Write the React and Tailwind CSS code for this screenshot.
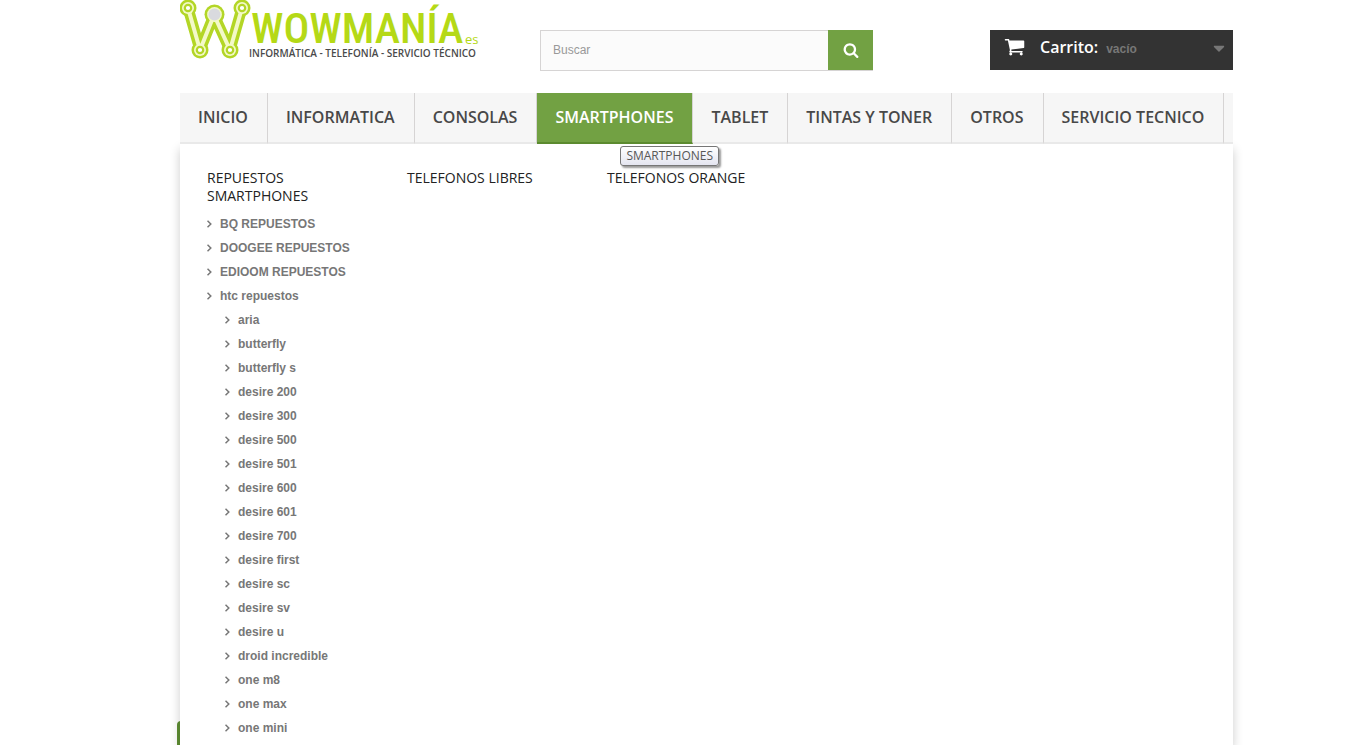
import { FaCaretDown } from 'react-icons/fa';

const menu = ['INICIO', 'INFORMATICA', 'CONSOLAS', 'SMARTPHONES', 'TABLET', 'TINTAS Y TONER', 'OTROS', 'SERVICIO TECNICO'];

const brands = ['BQ REPUESTOS', 'DOOGEE REPUESTOS', 'EDIOOM REPUESTOS', 'htc repuestos'];

const models = [
  'aria',
  'butterfly',
  'butterfly s',
  'desire 200',
  'desire 300',
  'desire 500',
  'desire 501',
  'desire 600',
  'desire 601',
  'desire 700',
  'desire first',
  'desire sc',
  'desire sv',
  'desire u',
  'droid incredible',
  'one m8',
  'one max',
  'one mini',
];

const nodes = [
  [8, 8],
  [62, 8],
  [20, 50],
  [50, 50],
];

const CartIcon = () => (
  <svg width="21" height="21" viewBox="0 0 1792 1792" fill="currentColor" className="shrink-0">
    <path d="M704 1536q0 52-38 90t-90 38-90-38-38-90 38-90 90-38 90 38 38 90zm896 0q0 52-38 90t-90 38-90-38-38-90 38-90 90-38 90 38 38 90zm128-1088v512q0 24-16.5 42.5t-40.5 21.5l-1044 122q13 60 13 70 0 16-24 64h920q26 0 45 19t19 45-19 45-45 19h-1024q-26 0-45-19t-19-45q0-11 8-31.5t16-36 21.5-40 15.5-29.5l-177-823h-204q-26 0-45-19t-19-45 19-45 45-19h256q16 0 28.5 6.5t19.5 15.5 13 24.5 8 26 5.5 29.5 4.5 26h1201q26 0 45 19t19 45z" />
  </svg>
);

const SearchIcon = () => (
  <svg width="16" height="16" viewBox="0 0 1792 1792" fill="currentColor">
    <path d="M1216 832q0-185-131.5-316.5t-316.5-131.5-316.5 131.5-131.5 316.5 131.5 316.5 316.5 131.5 316.5-131.5 131.5-316.5zm512 832q0 52-38 90t-90 38q-54 0-90-38l-343-342q-179 124-399 124-143 0-273.5-55.5t-225-150-150-225-55.5-273.5 55.5-273.5 150-225 225-150 273.5-55.5 273.5 55.5 225 150 150 225 55.5 273.5q0 220-124 399l343 343q37 37 37 90z" />
  </svg>
);

const AngleIcon = () => (
  <svg width="5" height="8" viewBox="0 0 5 8" fill="none" stroke="currentColor" strokeWidth="1.5" className="shrink-0">
    <path d="M0.5 0.8 L3.8 4 L0.5 7.2" />
  </svg>
);

const Logo = () => (
  <a href="#" aria-label="Wowmanía" className="block">
    <svg width="300" height="62" viewBox="0 0 300 62">
      <g fill="none" strokeLinejoin="round">
        <path d="M8 8 L20 50 L34 15 L50 50 L62 8" stroke="#b3d626" strokeWidth="11" />
        {nodes.map(([x, y]) => (
          <circle key={`${x}-${y}`} cx={x} cy={y} r="8.5" fill="#b3d626" />
        ))}
        <circle cx="34.5" cy="14.5" r="10" fill="#b3d626" />
        <path d="M8 8 L20 50 L34 15 L50 50 L62 8" stroke="#f3f9c8" strokeWidth="4" />
        {nodes.map(([x, y]) => (
          <g key={`${x}-${y}`}>
            <circle cx={x} cy={y} r="6" fill="#f3f9c8" />
            <circle cx={x} cy={y} r="3.2" fill="#fff" stroke="#b3d626" strokeWidth="2.2" />
          </g>
        ))}
        <circle cx="34.5" cy="14.5" r="7.4" fill="#f3f9c8" />
        <circle cx="34.5" cy="14.5" r="6" fill="#d9dade" />
      </g>
      <text x="71" y="43" fill="#b5d916" className="font-['Roboto_Condensed','Liberation_Sans_Narrow',sans-serif] text-[43px] font-medium">
        WOWMANÍA
      </text>
      <text x="285" y="44" fill="#b5d916" className="font-['Open_Sans',sans-serif] text-[13px]">
        es
      </text>
      <text x="69" y="57" fill="#4a4a4a" className="font-['Open_Sans',sans-serif] text-[10px] font-semibold">
        INFORMÁTICA - TELEFONÍA - SERVICIO TÉCNICO
      </text>
    </svg>
  </a>
);

const Search = () => (
  <form className="flex h-[41px] w-[333px]" onSubmit={(e) => e.preventDefault()}>
    <input
      type="text"
      aria-label="Buscar"
      placeholder="Buscar"
      className="min-w-0 flex-1 border border-r-0 border-[#d6d4d4] bg-[#fbfbfb] px-3 pb-[2px] text-xs text-[#686666] outline-none placeholder:text-[#999999]"
    />
    <button type="submit" aria-label="Buscar" className="flex w-[45px] items-center justify-center border-b border-[#d6d4d4] bg-[#72a143] text-white">
      <SearchIcon />
    </button>
  </form>
);

const Cart = () => (
  <a href="#" className="ml-auto flex h-10 w-[243px] items-center bg-[#333333] pr-[5px] pl-[14px] text-white">
    <span className="pb-2">
      <CartIcon />
    </span>
    <span className="ml-[15px] pb-[6px] font-['Open_Sans',sans-serif] text-base font-semibold">Carrito:</span>
    <span className="ml-2 pb-[3px] text-xs font-bold text-[#777777]">vacío</span>
    <FaCaretDown size={18} className="ml-auto mb-1 text-[#777777]" />
  </a>
);

const Item = ({ children }) => (
  <li className="h-6">
    <a href="#" className="flex items-center gap-2 leading-6">
      <AngleIcon />
      {children}
    </a>
  </li>
);

const Heading = ({ children }) => (
  <h4 className="font-['Open_Sans',sans-serif] text-sm leading-[18px] font-medium text-[#222222]">
    <a href="#">{children}</a>
  </h4>
);

const SubMenu = () => (
  <div className="relative flex flex-1 bg-white pt-[25px] pl-[27px] shadow-[0_5px_10px_rgba(0,0,0,0.2)]">
    <div className="w-[200px]">
      <div className="w-[140px]">
        <Heading>REPUESTOS SMARTPHONES</Heading>
      </div>
      <ul className="pt-[7px] text-xs font-bold text-[#777777]">
        {brands.map((name) => (
          <Item key={name}>{name}</Item>
        ))}
        <li>
          <ul className="pl-[18px]">
            {models.map((name) => (
              <Item key={name}>{name}</Item>
            ))}
          </ul>
        </li>
      </ul>
    </div>
    <div className="w-[200px]">
      <Heading>TELEFONOS LIBRES</Heading>
    </div>
    <div className="w-[200px]">
      <Heading>TELEFONOS ORANGE</Heading>
    </div>
  </div>
);

const NavItem = ({ label, active }) => (
  <li className="relative">
    <a
      href="#"
      className={`block h-[51px] border-r border-b-2 pt-[13px] pr-[19px] pl-[18px] text-base leading-[22px] font-semibold ${
        active
          ? 'border-r-[#d6d4d4] border-b-[#5b8a2f] bg-[#72a143] text-white'
          : 'border-r-[#d6d4d4] border-b-[#e9e9e9] text-[#484848]'
      }`}
    >
      {label}
    </a>
    {active && (
      <span
        role="tooltip"
        className="absolute top-[53px] left-[83px] z-10 h-5 rounded-[3px] border border-[#767676] bg-linear-to-b from-white to-[#e4e5f0] px-[5px] font-['Open_Sans',sans-serif] text-xs leading-[18px] text-[#575757] shadow-[2px_2px_2px_rgba(0,0,0,0.4)]"
      >
        {label}
      </span>
    )}
  </li>
);

export default function App() {
  return (
    <div className="flex h-screen flex-col overflow-hidden bg-white pr-[116px] pl-[180px] font-['Liberation_Sans',Arial,sans-serif]">
      <header className="flex h-[93px] items-start">
        <div className="w-[360px]">
          <Logo />
        </div>
        <div className="flex flex-1 pt-[30px]">
          <Search />
          <Cart />
        </div>
      </header>
      <main className="relative flex flex-1 flex-col">
        <nav className="relative z-10 border-b-2 border-[#e9e9e9] bg-[#f6f6f6] font-['Open_Sans',sans-serif]">
          <ul className="-mb-[2px] flex whitespace-nowrap">
            {menu.map((label) => (
              <NavItem key={label} label={label} active={label === 'SMARTPHONES'} />
            ))}
          </ul>
        </nav>
        <div className="absolute bottom-0 -left-[3px] h-6 w-20 rounded-tl-[4px] bg-[#5f8f33]" />
        <SubMenu />
      </main>
    </div>
  );
}
